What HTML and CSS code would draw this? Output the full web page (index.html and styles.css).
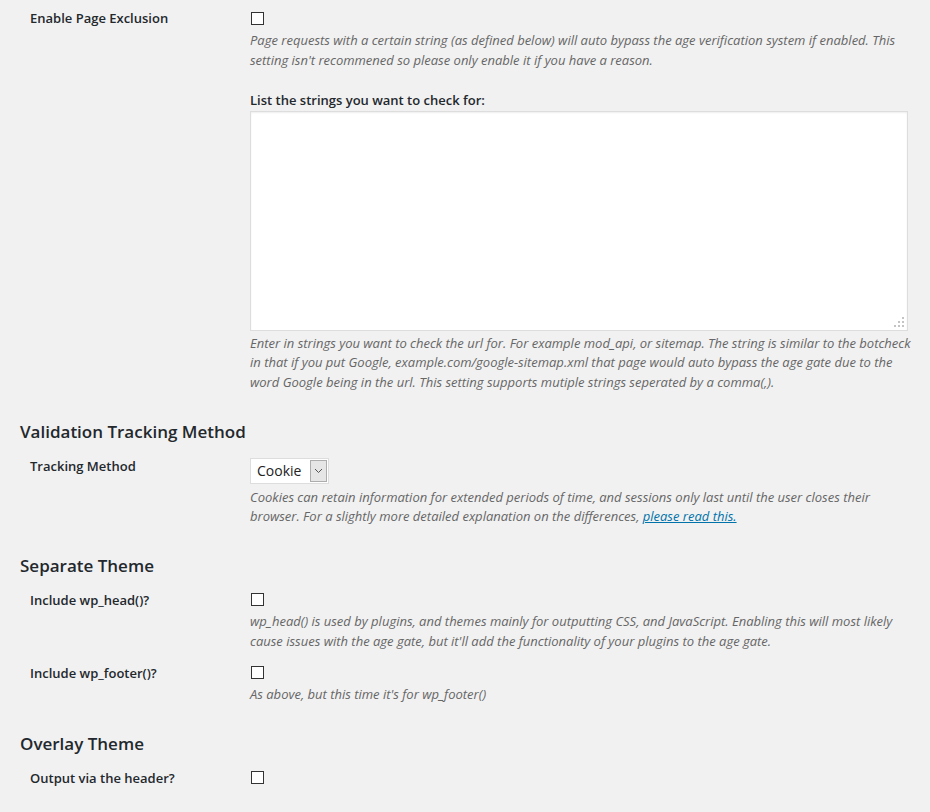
FILE: index.html
```html
<!DOCTYPE html>
<html lang="en">
<head>
    <meta charset="UTF-8">
    <title>Age Verification - Advanced Settings</title>
    <link rel="stylesheet" href="styles.css">
</head>
<body>
    <div class="settings">
        <!-- Page exclusion -->
        <div class="row">
            <div class="label first">Enable Page Exclusion</div>
            <div class="field">
                <span class="checkbox"></span>
                <p class="description">Page requests with a certain string (as defined below) will auto bypass the age verification system if enabled. This setting isn't recommened so please only enable it if you have a reason.</p>
                <label class="sub-label">List the strings you want to check for:</label>
                <div class="textarea-wrap">
                    <textarea class="strings"></textarea>
                    <svg class="grip" width="11" height="11" viewBox="0 0 11 11">
                        <rect x="8" y="0" width="2" height="2"/>
                        <rect x="4" y="4" width="2" height="2"/>
                        <rect x="8" y="4" width="2" height="2"/>
                        <rect x="0" y="8" width="2" height="2"/>
                        <rect x="4" y="8" width="2" height="2"/>
                        <rect x="8" y="8" width="2" height="2"/>
                    </svg>
                </div>
                <p class="description tight">Enter in strings you want to check the url for. For example mod_api, or sitemap. The string is similar to the botcheck in that if you put Google, example.com/google-sitemap.xml that page would auto bypass the age gate due to the word Google being in the url. This setting supports mutiple strings seperated by a comma(,).</p>
            </div>
        </div>

        <h2 class="section-title">Validation Tracking Method</h2>
        <div class="row">
            <div class="label">Tracking Method</div>
            <div class="field">
                <div class="select">
                    <span class="select-value">Cookie</span>
                    <span class="select-arrow">
                        <svg width="9" height="6" viewBox="0 0 9 6"><path d="M1 1l3.5 3.5L8 1" fill="none" stroke="#555" stroke-width="1"/></svg>
                    </span>
                </div>
                <p class="description">Cookies can retain information for extended periods of time, and sessions only last until the user closes their browser. For a slightly more detailed explanation on the differences, <a href="#">please read this.</a></p>
            </div>
        </div>

        <h2 class="section-title">Separate Theme</h2>
        <div class="row">
            <div class="label">Include wp_head()?</div>
            <div class="field">
                <span class="checkbox"></span>
                <p class="description">wp_head() is used by plugins, and themes mainly for outputting CSS, and JavaScript. Enabling this will most likely cause issues with the age gate, but it'll add the functionality of your plugins to the age gate.</p>
            </div>
        </div>
        <div class="row">
            <div class="label">Include wp_footer()?</div>
            <div class="field">
                <span class="checkbox"></span>
                <p class="description">As above, but this time it's for wp_footer()</p>
            </div>
        </div>

        <h2 class="section-title">Overlay Theme</h2>
        <div class="row">
            <div class="label">Output via the header?</div>
            <div class="field">
                <span class="checkbox"></span>
            </div>
        </div>
    </div>
</body>
</html>
```

FILE: styles.css
```css
body {
    margin: 0;
    background-color: #f1f1f1;
    color: #444;
    font-family: "Open Sans", sans-serif;
    font-size: 13px;
    line-height: 1.5;
}

.settings {
    padding: 4px 16px 20px 20px;
}

.row {
    display: grid;
    grid-template-columns: 230px 1fr;
    padding: 7px 0;
}

.label {
    padding: 0 0 0 10px;
    font-weight: 600;
    color: #23282d;
    line-height: 16px;
}

.label.first {
    margin-top: -1px;
}

.field {
    min-width: 0;
}

.checkbox {
    display: block;
    width: 11px;
    height: 11px;
    margin: 1px 0 6px 1px;
    border: 1px solid #333;
    background-color: #fff;
}

.description {
    margin: 0;
    color: #666;
    font-style: italic;
}

.description.tight {
    margin-top: 3px;
}

.description a {
    color: #0073aa;
    text-decoration: underline;
}

.sub-label {
    display: block;
    margin-top: 21px;
    font-weight: 600;
    color: #23282d;
}

.textarea-wrap {
    position: relative;
    width: 658px;
}

.strings {
    display: block;
    width: 658px;
    height: 220px;
    margin: 0;
    border: 1px solid #ddd;
    box-shadow: inset 0 1px 2px rgba(0, 0, 0, 0.07);
    background-color: #fff;
    box-sizing: border-box;
    resize: none;
}

/* dotted resize grip in the corner */
.grip {
    position: absolute;
    right: 3px;
    bottom: 3px;
    fill: #c4c4c4;
}

.section-title {
    margin: 21.5px 0 8px 0;
    font-size: 17px;
    font-weight: 600;
    line-height: 22px;
    color: #23282d;
}

.select {
    display: flex;
    align-items: stretch;
    height: 26px;
    width: 79px;
    border: 1px solid #ddd;
    background-color: #fff;
    box-sizing: border-box;
    margin-bottom: 4px;
}

.select-value {
    flex: 1;
    padding: 0 0 0 6px;
    font-size: 14px;
    line-height: 24px;
    color: #222;
}

.select-arrow {
    width: 15px;
    display: flex;
    align-items: center;
    justify-content: center;
    background-color: #e6e6e6;
    border: 1px solid #adadad;
    margin: 1px;
}
```
